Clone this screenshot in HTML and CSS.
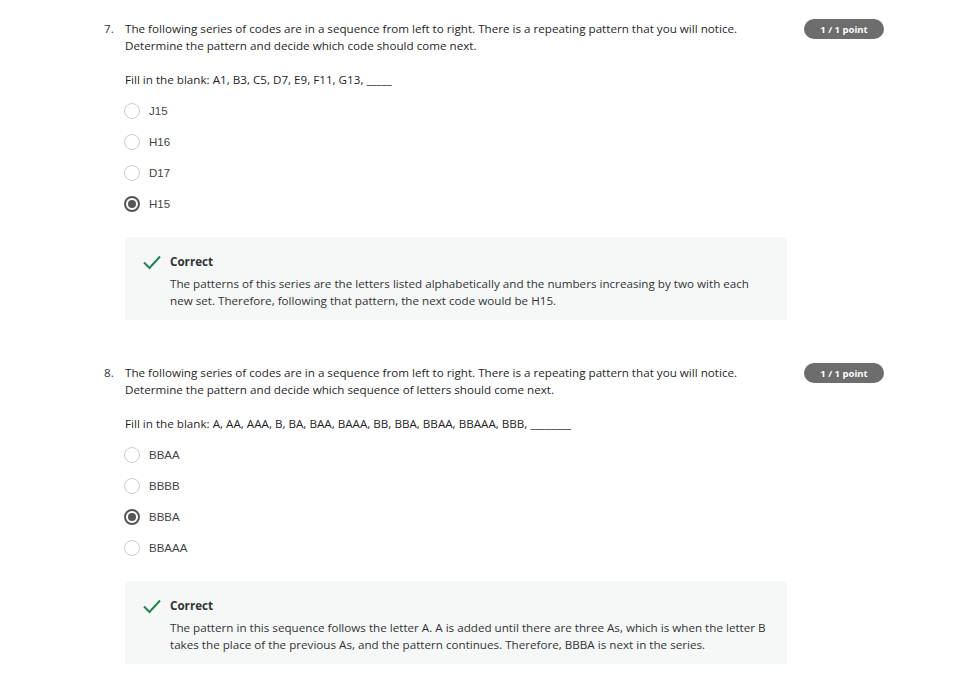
FILE: index.html
```html
<!DOCTYPE html>
<html>
<head>
<meta charset="utf-8">
<link rel="stylesheet" href="styles.css">
</head>
<body>
<div class="page">
  <div class="question">
    <div class="num">7.</div>
    <div class="body">
      <p class="prompt">The following series of codes are in a sequence from left to right. There is a repeating pattern that you will notice.<br>Determine the pattern and decide which code should come next.</p>
      <p class="fill">Fill in the blank: A1, B3, C5, D7, E9, F11, G13, _____</p>
      <div class="options">
        <div class="opt"><span class="radio"></span><span class="label">J15</span></div>
        <div class="opt"><span class="radio"></span><span class="label">H16</span></div>
        <div class="opt"><span class="radio"></span><span class="label">D17</span></div>
        <div class="opt"><span class="radio checked"></span><span class="label">H15</span></div>
      </div>
      <div class="feedback">
        <svg class="check" width="18" height="16" viewBox="0 0 18 16"><path d="M1 8.5 L6.5 14 L17 2.5" fill="none" stroke="#1f8354" stroke-width="2"/></svg>
        <div class="fb-text">
          <div class="fb-title">Correct</div>
          <p>The patterns of this series are the letters listed alphabetically and the numbers increasing by two with each<br>new set. Therefore, following that pattern, the next code would be H15.</p>
        </div>
      </div>
    </div>
    <div class="badge">1 / 1 point</div>
  </div>

  <div class="question q2">
    <div class="num">8.</div>
    <div class="body">
      <p class="prompt">The following series of codes are in a sequence from left to right. There is a repeating pattern that you will notice.<br>Determine the pattern and decide which sequence of letters should come next.</p>
      <p class="fill">Fill in the blank: A, AA, AAA, B, BA, BAA, BAAA, BB, BBA, BBAA, BBAAA, BBB, ________</p>
      <div class="options">
        <div class="opt"><span class="radio"></span><span class="label">BBAA</span></div>
        <div class="opt"><span class="radio"></span><span class="label">BBBB</span></div>
        <div class="opt"><span class="radio checked"></span><span class="label">BBBA</span></div>
        <div class="opt"><span class="radio"></span><span class="label">BBAAA</span></div>
      </div>
      <div class="feedback">
        <svg class="check" width="18" height="16" viewBox="0 0 18 16"><path d="M1 8.5 L6.5 14 L17 2.5" fill="none" stroke="#1f8354" stroke-width="2"/></svg>
        <div class="fb-text">
          <div class="fb-title">Correct</div>
          <p>The pattern in this sequence follows the letter A. A is added until there are three As, which is when the letter B<br>takes the place of the previous As, and the pattern continues. Therefore, BBBA is next in the series.</p>
        </div>
      </div>
    </div>
    <div class="badge">1 / 1 point</div>
  </div>
</div>
</body>
</html>
```

FILE: styles.css
```css
* { box-sizing: border-box; }
body {
  margin: 0;
  background: #ffffff;
  font-family: "Open Sans", "DejaVu Sans", sans-serif;
  font-size: 11.65px;
  color: #1f1f1f;
}
.page {
  padding: 20px 0 0 104px;
  width: 965px;
}
.question {
  display: flex;
  align-items: flex-start;
}
.q2 { margin-top: 44px; }
.num {
  width: 21px;
  line-height: 17px;
  color: #333;
}
.body {
  width: 662px;
}
.prompt {
  margin: 0;
  line-height: 17px;
}
.fill {
  margin: 17px 0 0 0;
  line-height: 17px;
}
.options {
  margin-top: 15px;
  display: flex;
  flex-direction: column;
  gap: 15px;
}
.opt {
  display: flex;
  align-items: center;
  height: 16px;
}
.radio {
  width: 16px;
  height: 16px;
  border-radius: 50%;
  border: 1.5px solid #cccccc;
  margin-left: -1px;
  position: relative;
  flex: none;
}
.radio.checked {
  border: 2px solid #555;
}
.radio.checked::after {
  content: "";
  position: absolute;
  left: 2px;
  top: 2px;
  width: 8px;
  height: 8px;
  border-radius: 50%;
  background: #555;
}
.label {
  margin-left: 9px;
  font-family: "Liberation Sans", Arial, sans-serif;
  font-size: 11.5px;
  color: #444;
}
.feedback {
  margin-top: 25px;
  background: #f5f8f7;
  display: flex;
  align-items: flex-start;
  padding: 17px 20px 11px 18px;
}
.check {
  flex: none;
}
.fb-text {
  margin-left: 9px;
}
.fb-title {
  font-weight: 700;
  line-height: 16px;
  color: #333;
}
.fb-text p {
  margin: 5px 0 0 0;
  line-height: 17px;
  color: #333;
}
.badge {
  margin-left: 17px;
  width: 80px;
  height: 20px;
  margin-top: -1px;
  border-radius: 10px;
  background: #6d6d6d;
  color: #fff;
  font-weight: 700;
  font-size: 9.5px;
  display: flex;
  align-items: center;
  justify-content: center;
}
```
